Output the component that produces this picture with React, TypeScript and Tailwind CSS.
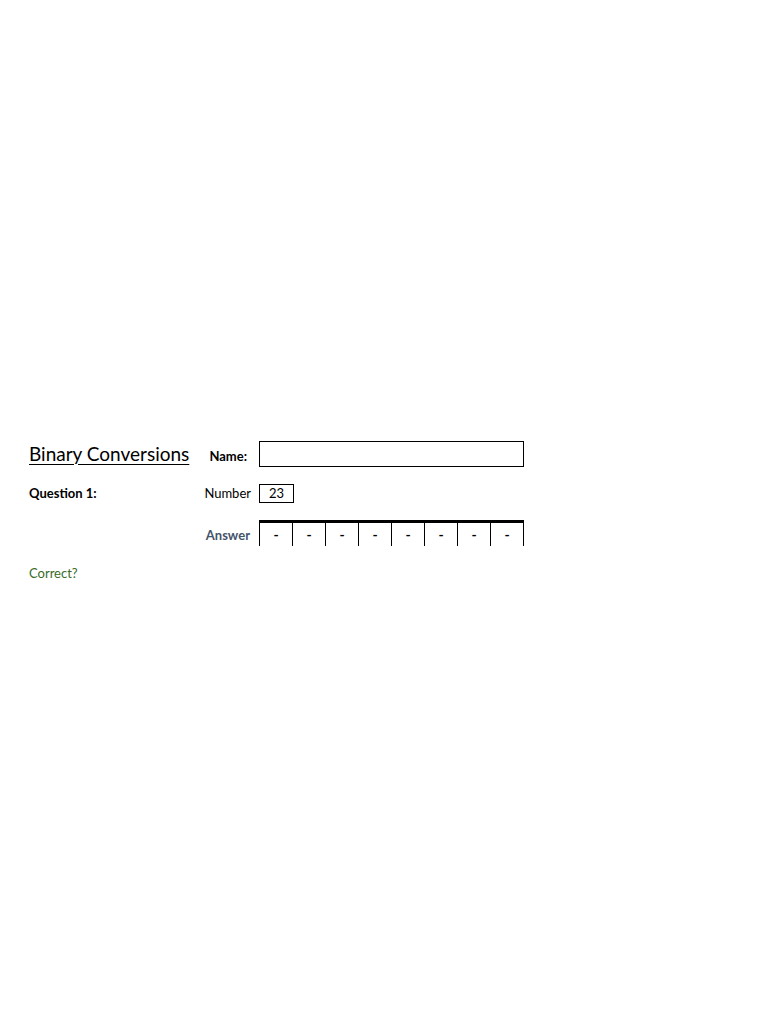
import React from "react";

export default function App() {
  const bits = ["-", "-", "-", "-", "-", "-", "-", "-"];
  return (
    <div className="min-h-[1024px] w-[768px] bg-white font-['Lato',sans-serif] text-black">
      <div className="pt-[441px] pl-[29px]">
        <div className="grid grid-cols-[175px_55px_265px] items-center h-[26px]">
          <div className="text-[19px] leading-none underline underline-offset-[3px] decoration-1 -mt-[2px] whitespace-nowrap">
            Binary Conversions
          </div>
          <div className="text-right pr-[12px] text-[13px] font-bold pt-[6px]">Name:</div>
          <div className="h-[26px] border border-black" />
        </div>
        <div className="grid grid-cols-[175px_55px_265px] items-center h-[19px] mt-[17px]">
          <div className="text-[13px] font-bold">Question 1:</div>
          <div className="text-right pr-[8px] text-[13px]">Number</div>
          <div>
            <div className="w-[35px] h-[19px] border border-black flex items-center justify-center text-[13px]">
              23
            </div>
          </div>
        </div>
        <div className="grid grid-cols-[175px_55px_265px] items-center h-[26px] mt-[17px]">
          <div />
          <div className="text-right pr-[9px] text-[13px] font-bold text-[#44546a] pt-[6px]">Answer</div>
          <div className="flex border-t-[3px] border-black h-[26px]">
            {bits.map((b, i) => (
              <div
                key={i}
                className={`flex-1 border-l border-black flex justify-center pt-[1px] text-[14px] font-bold ${i === bits.length - 1 ? "border-r" : ""}`}
              >
                {b}
              </div>
            ))}
          </div>
        </div>
        <div className="mt-[18px] text-[13px] text-[#3a6b26]">Correct?</div>
      </div>
    </div>
  );
}
